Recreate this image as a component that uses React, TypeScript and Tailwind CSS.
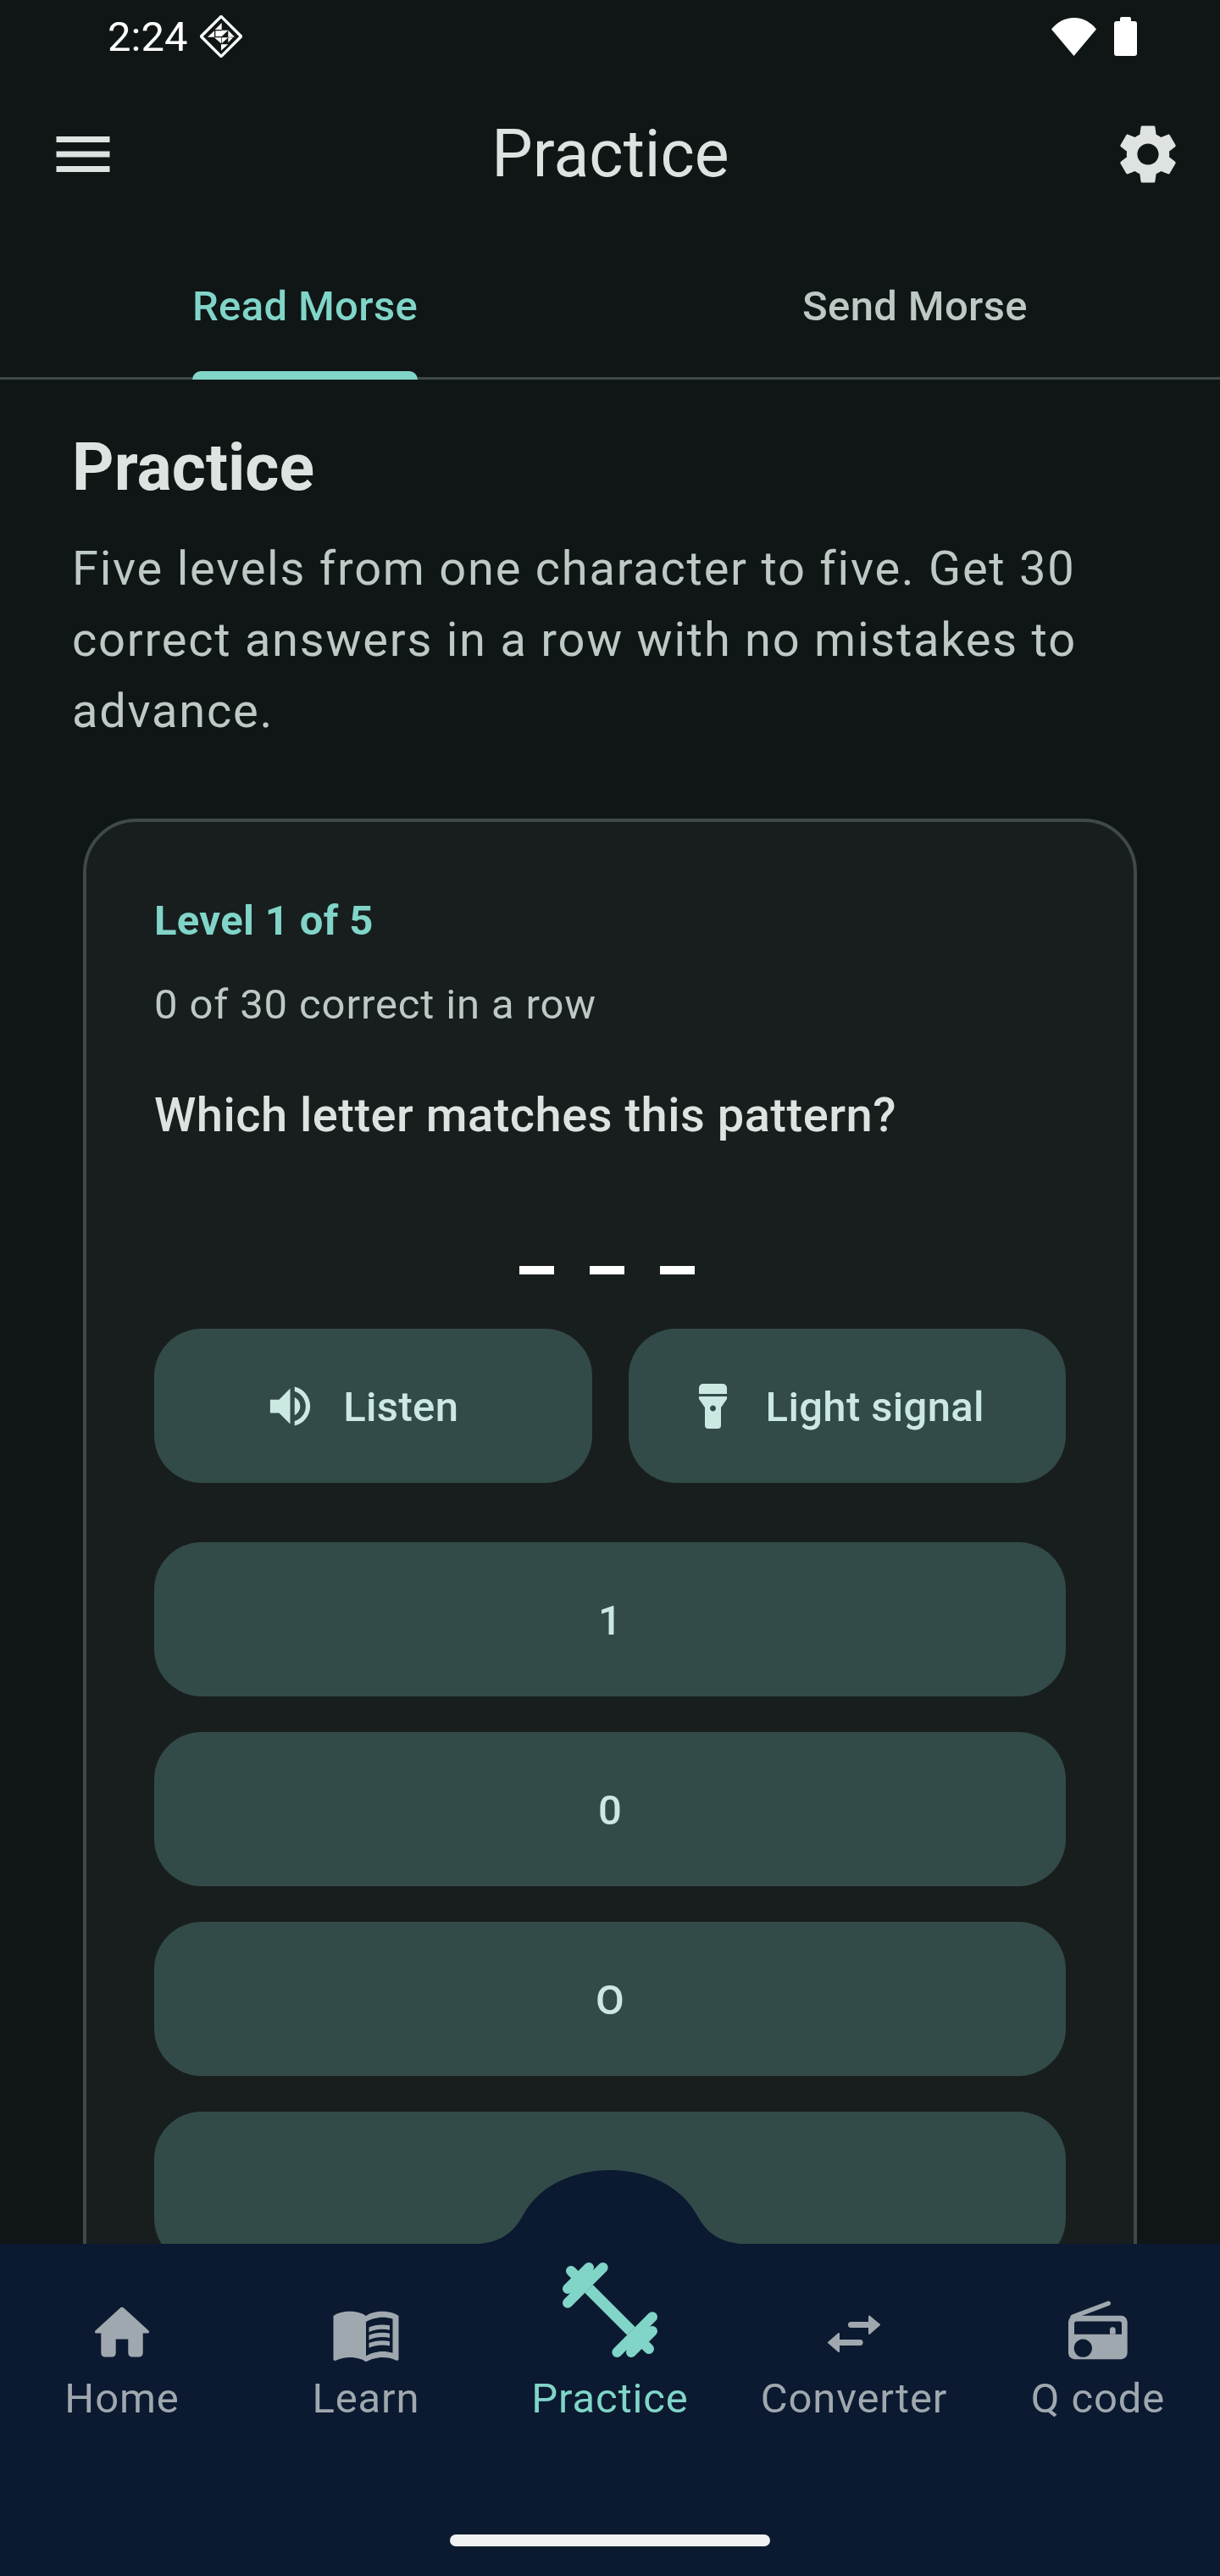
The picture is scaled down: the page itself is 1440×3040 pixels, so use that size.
import React from 'react';
import { MdMenu, MdMenuBook, MdSettings, MdVolumeUp } from 'react-icons/md';

const HomeIcon = () => (
  <svg width="84" height="84" viewBox="0 0 84 84" fill="currentColor">
    <path d="M39.5 12a3.5 3.5 0 0 1 5 0L73.5 38.5c1 1 .5 3-1 3H66.7V65a4.5 4.5 0 0 1-4.5 4.5H53.8a4.5 4.5 0 0 1-4.5-4.5V48.5H34.7V65a4.5 4.5 0 0 1-4.5 4.5H21.8a4.5 4.5 0 0 1-4.5-4.5V41.5H11.5c-1.5 0-2-2-1-3Z" />
  </svg>
);

const RadioIcon = () => (
  <svg width="84" height="84" viewBox="12 19.5 252 252" fill="currentColor">
    <path d="M48 86 175 38" stroke="currentColor" strokeWidth="16" strokeLinecap="round" />
    <path
      fillRule="evenodd"
      d="M55 82H220a22 22 0 0 1 22 22V214a22 22 0 0 1-22 22H55a22 22 0 0 1-22-22V104a22 22 0 0 1 22-22ZM62 102a8 8 0 0 0-8 8V148H222V110a8 8 0 0 0-8-8ZM85 165a32 32 0 1 0 .01 0Z"
    />
    <path d="M180 148V132a10 10 0 0 1 20 0V148Z" />
  </svg>
);

const SwapIcon = () => (
  <svg width="84" height="84" viewBox="0 0 84 84" fill="currentColor">
    <path d="M38.5 31.5H60M49 52.5H24" stroke="currentColor" strokeWidth="7" strokeLinecap="round" />
    <path d="M60 21.5 72 31.5 60 42ZM24 42 12 52.5 24 63Z" stroke="currentColor" strokeWidth="2" strokeLinejoin="round" />
  </svg>
);

// Barbell drawn as round-capped plates on a diagonal bar
const BarbellIcon = () => (
  <svg
    width="140"
    height="140"
    viewBox="0 0 420 420"
    fill="none"
    stroke="currentColor"
    strokeLinecap="round"
    strokeWidth="36"
    className="-translate-y-[28px] shrink-0"
  >
    <path d="M135 135 285 285" strokeWidth="41" strokeLinecap="butt" />
    <path d="M60 185 185 60M60 135 135 60M72 72l28 28" />
    <path d="M360 235 235 360M360 285 285 360M348 348l-28-28" />
  </svg>
);

const FlashlightIcon = () => (
  <svg width="63" height="63" viewBox="0 0 63 63" fill="currentColor">
    <path d="M20 5H43a5 5 0 0 1 5 5V17H15V10a5 5 0 0 1 5-5Z" />
    <path
      fillRule="evenodd"
      d="M15 20H48V23L41 33V54a4 4 0 0 1-4 4H26a4 4 0 0 1-4-4V33L15 23ZM31.5 30.5a3.5 3.5 0 1 0 .01 0Z"
    />
  </svg>
);

const navItems: { label: string; icon: React.ReactNode; active?: boolean }[] = [
  { label: 'Home', icon: <HomeIcon /> },
  { label: 'Learn', icon: <MdMenuBook size={84} /> },
  { label: 'Practice', icon: <BarbellIcon />, active: true },
  { label: 'Converter', icon: <SwapIcon /> },
  { label: 'Q code', icon: <RadioIcon /> },
];

const answers = ['1', '0', 'O', ''];

const StatusBadge = () => (
  <svg width="50" height="50" viewBox="15 15 150 150" fill="none" className="ml-[15px]">
    <path d="M90 19 161 90 90 161 19 90Z" stroke="#fff" strokeWidth="10" strokeLinejoin="round" />
    <path
      d="M92 42V66H68ZM66 70V92H42ZM70 70H92V90H70ZM92 68H115L92 90ZM115 68 138 92H115ZM66 94H90V115ZM92 94H115L92 115ZM115 94 115 112 132 94ZM90 118H115L90 140Z"
      fill="#fff"
    />
  </svg>
);

const StatusBar = () => (
  <div className="h-[86px] flex items-center justify-between pl-[127px] pr-[98px] text-white">
    <div className="flex items-center">
      <span className="text-[49px] leading-none">2:24</span>
      <StatusBadge />
    </div>
    <div className="flex items-center gap-[21px]">
      <svg width="53" height="45" viewBox="0 0 53 45" fill="#fff">
        <path d="M0 13.5C7 5 16 0 26.5 0S46 5 53 13.5L26.5 45Z" />
      </svg>
      <svg width="27" height="46" viewBox="0 0 27 46" fill="#fff">
        <path d="M7 5V2a2 2 0 0 1 2-2h9a2 2 0 0 1 2 2v3h4a3 3 0 0 1 3 3v35a3 3 0 0 1-3 3H3a3 3 0 0 1-3-3V8a3 3 0 0 1 3-3Z" />
      </svg>
    </div>
  </div>
);

const AppBar = () => (
  <div className="h-[192px] grid grid-cols-[1fr_auto_1fr] items-center pl-[56px] pr-[43px] text-[#dee3e1]">
    <MdMenu size={84} />
    <h1 className="text-[77px] leading-none -ml-[12px]">Practice</h1>
    <MdSettings size={84} className="justify-self-end" />
  </div>
);

const Tabs = () => (
  <div className="h-[170px] grid grid-cols-2 border-b-[3px] border-[#3f4947] text-[49px] font-medium tracking-[0.35px]">
    <div className="relative flex items-center justify-center text-[#80d5c8]">
      Read Morse
      <span className="absolute -bottom-[3px] left-[227px] w-[266px] h-[10px] rounded-t-[10px] bg-[#80d5c8]" />
    </div>
    <div className="flex items-center justify-center text-[#bec9c6]">Send Morse</div>
  </div>
);

const ActionButton = ({ icon, label }: { icon: React.ReactNode; label: string }) => (
  <button className="h-[182px] rounded-[56px] bg-[#334b48] text-[#cce8e3] text-[49px] font-medium tracking-[0.35px] pr-[28px] flex items-center justify-center gap-[31px]">
    {icon}
    <span className="pt-[3px]">{label}</span>
  </button>
);

const PracticeCard = () => (
  <div className="mx-[98px] mt-[85px] rounded-[63px] border-4 border-[#3f4947] bg-[#181e1e] px-[80px] pt-[82px] pb-[300px]">
    <p className="text-[49px] leading-[70px] font-bold tracking-[0.35px] text-[#80d5c8]">Level 1 of 5</p>
    <p className="mt-[29px] text-[49px] leading-[70px] tracking-[0.875px] text-[#bec9c6]">0 of 30 correct in a row</p>
    <p className="mt-[53px] text-[56px] leading-[84px] font-medium tracking-[0.5px] text-[#dee3e1]">
      Which letter matches this pattern?
    </p>
    {/* morse pattern for the current question */}
    <div className="mt-[136px] h-[10px] flex justify-center gap-[42px] pr-[7px]">
      <span className="w-[41px] bg-white" />
      <span className="w-[41px] bg-white" />
      <span className="w-[41px] bg-white" />
    </div>
    <div className="mt-[64px] grid grid-cols-2 gap-[43px]">
      <ActionButton icon={<MdVolumeUp size={63} />} label="Listen" />
      <ActionButton icon={<FlashlightIcon />} label="Light signal" />
    </div>
    <div className="mt-[70px] flex flex-col gap-[42px]">
      {answers.map((answer, i) => (
        <button
          key={i}
          className="h-[182px] rounded-[56px] bg-[#334b48] text-[#cce8e3] text-[49px] font-medium pt-[3px] flex items-center justify-center"
        >
          {answer}
        </button>
      ))}
    </div>
  </div>
);

const BottomNav = () => (
  <nav className="relative z-10 h-[392px] shrink-0 bg-[#0b1a30] pt-[64px]">
    {/* raised bump behind the active destination */}
    <svg
      width="336"
      height="88"
      viewBox="0 0 336 88"
      className="absolute -top-[87px] left-[552px]"
      fill="#0b1a30"
    >
      <path d="M0 88C35 87 52 78 66 52 85 18 125 0 168 0S251 18 270 52C284 78 301 87 336 88Z" />
    </svg>
    <div className="grid grid-cols-5">
      {navItems.map(({ label, icon, active }) => (
        <div
          key={label}
          className={`flex flex-col items-center ${active ? 'text-[#80d5c8]' : 'text-[#a0a8af]'}`}
        >
          <div className="h-[84px] flex items-center justify-center">{icon}</div>
          <span className="mt-[7px] text-[49px] leading-[56px] tracking-[0.875px]">{label}</span>
        </div>
      ))}
    </div>
    <div className="absolute bottom-[35px] left-[531px] w-[378px] h-[14px] rounded-full bg-[#eef0f2]" />
  </nav>
);

export default function App() {
  return (
    <div className="w-[1440px] h-[3040px] flex flex-col overflow-hidden bg-[#101616] font-['Roboto',sans-serif]">
      <StatusBar />
      <AppBar />
      <Tabs />
      <main className="flex-1 min-h-0 overflow-hidden">
        <div className="px-[85px] pt-[55px]">
          <h2 className="text-[77px] leading-[98px] font-bold text-[#dee3e1]">Practice</h2>
          <p className="mt-[28px] text-[56px] leading-[84px] tracking-[1.75px] text-[#bec9c6]">
            Five levels from one character to five. Get 30 correct answers in a row with no mistakes to advance.
          </p>
        </div>
        <PracticeCard />
      </main>
      <BottomNav />
    </div>
  );
}
